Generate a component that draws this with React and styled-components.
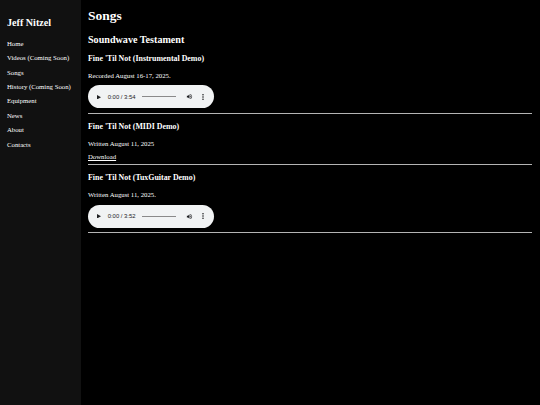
import React from "react";
import styled, { createGlobalStyle } from "styled-components";

const GlobalStyle = createGlobalStyle`
  html, body {
    margin: 0;
    padding: 0;
    background-color: #000;
    color: #fff;
    font-family: "Liberation Serif", "Times New Roman", serif;
  }
`;

const Container = styled.div`
  display: flex;
  min-height: 100vh;
  background-color: #000;
`;

const Sidebar = styled.nav`
  width: 81px;
  flex-shrink: 0;
  box-sizing: border-box;
  padding: 0 7px;
  background-color: #111;
`;

const Brand = styled.h2`
  margin: 16.8px 0 0;
  font-size: 10.125px;
  font-weight: bold;
  white-space: nowrap;
`;

const NavList = styled.ul`
  list-style: none;
  margin: 12px 0 0;
  padding: 0;
  display: flex;
  flex-direction: column;
  gap: 7.4px;
`;

const NavLink = styled.a`
  display: block;
  font-size: 6.75px;
  color: #fff;
  text-decoration: none;
  white-space: nowrap;
`;

const Main = styled.main`
  flex: 1;
  padding: 0 8px 0 7px;
`;

const Title = styled.h1`
  margin: 8.4px 0 9.6px;
  font-size: 13.5px;
  font-weight: bold;
`;

const Album = styled.h2`
  margin: 0 0 9px;
  font-size: 10.125px;
  font-weight: bold;
`;

const SongTitle = styled.h3`
  margin: 8.6px 0;
  font-size: 7.9px;
  font-weight: bold;
`;

const Note = styled.p`
  margin: 6.75px 0;
  font-size: 6.75px;
`;

const Download = styled.a`
  display: block;
  font-size: 6.75px;
  color: #fff;
  text-decoration: underline;
`;

const Divider = styled.hr`
  margin: 3.2px 0 7.9px;
  border: none;
  height: 1px;
  background-color: #b4b4b4;
`;

const PlayerRow = styled.div`
  padding-bottom: 1px;
`;

const Player = styled.div`
  display: flex;
  align-items: center;
  width: 126px;
  height: 23px;
  box-sizing: border-box;
  padding-left: 9px;
  border-radius: 12px;
  background-color: #f1f3f4;
  color: #202124;
`;

const Time = styled.span`
  margin-left: 6.7px;
  font-family: "Liberation Sans", Arial, sans-serif;
  font-size: 5.9px;
  white-space: nowrap;
`;

const Track = styled.div`
  width: 34px;
  height: 1px;
  margin-left: 6.3px;
  background-color: #8a8a8a;
`;

const Icon = styled.svg`
  display: block;
  flex-shrink: 0;
  margin-left: ${(p) => p.$gap || 0}px;
`;

function AudioPlayer({ duration }) {
  return (
    <PlayerRow>
      <Player>
        <Icon width="4" height="4.5" viewBox="0 0 8 9">
          <path d="M0 0 L8 4.5 L0 9 Z" fill="#202124" />
        </Icon>
        <Time>0:00 / {duration}</Time>
        <Track />
        <Icon $gap={9.7} width="7" height="7" viewBox="0 0 24 24">
          <path
            d="M3 9v6h4l5 5V4L7 9H3zm13.5 3A4.5 4.5 0 0 0 14 7.97v8.05A4.48 4.48 0 0 0 16.5 12zM14 3.23v2.06c2.89.86 5 3.54 5 6.71s-2.11 5.85-5 6.71v2.06c4.01-.91 7-4.49 7-8.77s-2.99-7.86-7-8.77z"
            fill="#202124"
          />
        </Icon>
        <Icon $gap={9} width="2" height="6" viewBox="0 0 2 6">
          <circle cx="1" cy="0.8" r="0.8" fill="#202124" />
          <circle cx="1" cy="3" r="0.8" fill="#202124" />
          <circle cx="1" cy="5.2" r="0.8" fill="#202124" />
        </Icon>
      </Player>
    </PlayerRow>
  );
}

const links = [
  "Home",
  "Videos (Coming Soon)",
  "Songs",
  "History (Coming Soon)",
  "Equipment",
  "News",
  "About",
  "Contacts",
];

export default function App() {
  return (
    <>
      <GlobalStyle />
      <Container>
        <Sidebar>
          <Brand>Jeff Nitzel</Brand>
          <NavList>
            {links.map((l) => (
              <li key={l}>
                <NavLink href="#">{l}</NavLink>
              </li>
            ))}
          </NavList>
        </Sidebar>
        <Main>
          <Title>Songs</Title>
          <Album>Soundwave Testament</Album>

          <SongTitle>Fine 'Til Not (Instrumental Demo)</SongTitle>
          <Note>Recorded August 16-17, 2025.</Note>
          <AudioPlayer duration="3:54" />
          <Divider />

          <SongTitle>Fine 'Til Not (MIDI Demo)</SongTitle>
          <Note>Written August 11, 2025</Note>
          <Download href="#">Download</Download>
          <Divider />

          <SongTitle>Fine 'Til Not (TuxGuitar Demo)</SongTitle>
          <Note>Written August 11, 2025.</Note>
          <AudioPlayer duration="3:52" />
          <Divider />
        </Main>
      </Container>
    </>
  );
}
